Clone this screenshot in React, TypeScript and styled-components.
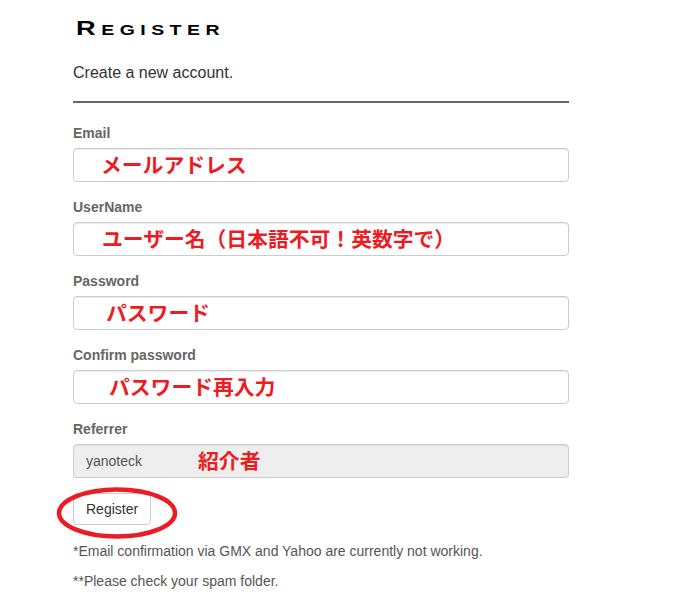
import React from "react";
import styled, { createGlobalStyle } from "styled-components";

const Global = createGlobalStyle`
  html, body { margin: 0; padding: 0; background: #fff; }
  body { font-family: "Liberation Sans", Arial, sans-serif; color: #333; }
`;

const Page = styled.div`
  width: 496px;
  padding: 16px 0 20px 73px;
`;

const Title = styled.h2`
  display: inline-block;
  margin: 0 0 0 3px;
  font-family: "Liberation Sans", Arial, sans-serif;
  font-weight: 700;
  font-size: 21px;
  line-height: 24px;
  font-variant: small-caps;
  letter-spacing: 4.2px;
  color: #000;
  transform: scaleX(1.3);
  transform-origin: left center;
`;

const Subtitle = styled.p`
  margin: 22px 0 0;
  font-size: 16px;
  line-height: 22px;
  color: #333;
`;

const Rule = styled.hr`
  margin: 17px 0 0;
  border: 0;
  border-top: 2px solid #666;
  height: 0;
`;

const Form = styled.form`
  margin-top: 20px;
  position: relative;
`;

const Group = styled.div`
  margin-bottom: 15px;
`;

const Label = styled.label`
  display: block;
  margin-bottom: 5px;
  font-size: 14px;
  line-height: 20px;
  font-weight: 700;
  color: #666;
`;

const Field = styled.div<{ $readonly?: boolean }>`
  box-sizing: border-box;
  height: 34px;
  display: flex;
  align-items: center;
  padding: 0 12px;
  border: 1px solid #ccc;
  border-radius: 4px;
  background: ${(p) => (p.$readonly ? "#eee" : "#fff")};
  box-shadow: inset 0 1px 1px rgba(0, 0, 0, 0.075);
  font-size: 14px;
  color: #555;
`;

const Note = styled.span<{ $indent: number }>`
  margin-left: ${(p) => p.$indent}px;
  margin-top: -3px;
  font-family: "Noto Sans CJK JP", "Liberation Sans", sans-serif;
  font-weight: 700;
  font-size: 20.8px;
  line-height: 24px;
  color: #ec1c24;
  white-space: nowrap;
`;

const ButtonWrap = styled.div`
  position: relative;
  margin-top: 1px;
  height: 32px;
`;

const Button = styled.button`
  box-sizing: border-box;
  height: 32px;
  padding: 0 12px;
  border: 1px solid #ccc;
  border-radius: 4px;
  background: #fff;
  font-family: "Liberation Sans", Arial, sans-serif;
  font-size: 14px;
  line-height: 20px;
  color: #333;
`;

const Circle = styled.svg`
  position: absolute;
  left: -18px;
  top: -6px;
  pointer-events: none;
`;

const Footnote = styled.p<{ $gap: number }>`
  margin: ${(p) => p.$gap}px 0 0;
  font-size: 14px;
  line-height: 20px;
  color: #555;
`;

const fields = [
  { label: "Email", note: "メールアドレス", indent: 15 },
  { label: "UserName", note: "ユーザー名（日本語不可！英数字で）", indent: 16 },
  { label: "Password", note: "パスワード", indent: 20 },
  { label: "Confirm password", note: "パスワード再入力", indent: 23 },
];

export default function App() {
  return (
    <Page>
      <Global />
      <Title>Register</Title>
      <Subtitle>Create a new account.</Subtitle>
      <Rule />
      <Form>
        {fields.map((f) => (
          <Group key={f.label}>
            <Label>{f.label}</Label>
            <Field>
              <Note $indent={f.indent}>{f.note}</Note>
            </Field>
          </Group>
        ))}
        <Group>
          <Label>Referrer</Label>
          <Field $readonly>
            yanoteck
            <Note $indent={56}>紹介者</Note>
          </Field>
        </Group>
        <ButtonWrap>
          <Button type="button">Register</Button>
          <Circle width="126" height="54" viewBox="0 0 126 54">
            <ellipse cx="62" cy="26" rx="58" ry="23.5" fill="none" stroke="#ec1c24" strokeWidth="4.5" />
          </Circle>
        </ButtonWrap>
      </Form>
      <Footnote $gap={16}>*Email confirmation via GMX and Yahoo are currently not working.</Footnote>
      <Footnote $gap={10}>**Please check your spam folder.</Footnote>
    </Page>
  );
}
